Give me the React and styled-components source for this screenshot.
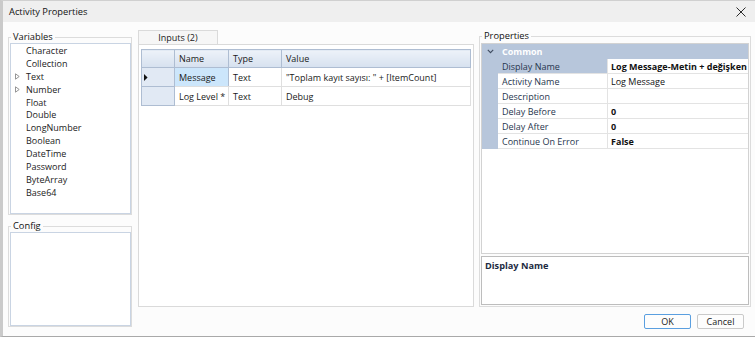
import React from "react";
import styled, { createGlobalStyle, css } from "styled-components";

const GlobalStyle = createGlobalStyle`
  html, body { margin: 0; padding: 0; background: #ffffff; }
  body { font-family: "Open Sans", "Noto Sans", sans-serif; color: #1a1a1a; }
  * { box-sizing: border-box; }
`;

const Window = styled.div`
  width: 755px;
  height: 337px;
  display: flex;
  flex-direction: column;
  border-left: 3px solid #cacaca;
  border-top: 1px solid #d0d0d0;
  border-bottom: 1px solid #a9a9a9;
  background: #fcfcfc;
`;

const TitleBar = styled.div`
  height: 21px;
  flex: none;
  display: flex;
  align-items: center;
  justify-content: space-between;
  padding: 0 9px 0 6px;
  background: #efefef;
  font-size: 9.3px;
  color: #111;
`;

const CloseButton = styled.button`
  all: unset;
  display: flex;
  width: 11px;
  height: 11px;
  align-items: center;
  justify-content: center;
`;

const Body = styled.div`
  flex: 1;
  display: flex;
  gap: 6px;
  padding: 0 4px 0 5px;
`;

const LeftColumn = styled.div`
  width: 124px;
  flex: none;
  display: flex;
  flex-direction: column;
  gap: 5px;
  padding-top: 9px;
`;

const Group = styled.fieldset`
  margin: 0;
  min-width: 0;
  padding: ${(p) => p.$pad || "0 0 0 1px"};
  border: 1px solid #dcdcdc;
`;

const Legend = styled.legend`
  margin-left: 1px;
  padding: 0 2px;
  font-size: 9.3px;
  line-height: 12px;
  color: #111;
`;

const ListBox = styled.div`
  height: ${(p) => p.$h}px;
  background: #ffffff;
  border: 1px solid #c9d4e3;
`;

const ListItem = styled.div`
  height: 12.9px;
  display: flex;
  align-items: center;
  padding-left: 4px;
  font-size: 9px;
  color: #222;
  white-space: nowrap;
`;

const Expander = styled.span`
  width: 11px;
  flex: none;
  display: flex;
  align-items: center;
`;

const Main = styled.div`
  flex: 1;
  display: flex;
  flex-direction: column;
  padding-top: 8px;
`;

const PanelsRow = styled.div`
  height: 277px;
  display: flex;
  gap: 5px;
`;

const TabPanel = styled.div`
  width: 336px;
  flex: none;
  display: flex;
  flex-direction: column;
`;

const Tab = styled.div`
  align-self: flex-start;
  width: 80px;
  height: 14px;
  border: 1px solid #dadada;
  border-bottom: none;
  background: #f6f6f6;
  font-size: 9px;
  line-height: 13px;
  text-align: center;
  color: #1a1a1a;
`;

const TabBody = styled.div`
  flex: 1;
  border: 1px solid #dadada;
  background: #ffffff;
  padding: 4px 2px 0 2px;
`;

const Table = styled.table`
  width: 330px;
  border-collapse: collapse;
  table-layout: fixed;
  border: 1px solid #aebdd2;
  font-size: 9px;
`;

const HeadCell = styled.th`
  height: 18px;
  padding: 0 4px;
  text-align: left;
  font-weight: normal;
  color: #1a1a1a;
  background: linear-gradient(#edf2f9, #d6e1ef);
  border: 1px solid #aebdd2;
  white-space: nowrap;
`;

const RowHead = styled.td`
  height: 19px;
  padding: 0 0 0 2px;
  background: #e1e9f4;
  border: 1px solid #aebdd2;
`;

const Cell = styled.td`
  height: 19px;
  padding: 0 4px;
  border: 1px solid #dfdfdf;
  color: #1a1a1a;
  white-space: nowrap;
  overflow: hidden;
  ${(p) =>
    p.$selected &&
    css`
      background: #cce6fb;
      border-right-color: #aebdd2;
    `}
`;

const PropsGroup = styled.fieldset`
  flex: 1;
  margin: 0;
  min-width: 0;
  padding: 1px;
  border: 1px solid #dcdcdc;
`;

const PropsInner = styled.div`
  height: 262px;
  display: flex;
  flex-direction: column;
  gap: 2px;
`;

const PropGrid = styled.div`
  flex: 1;
  border: 1px solid #d2d2d2;
  background: #ffffff;
  overflow: hidden;
`;

const PropRow = styled.div`
  height: 15px;
  display: grid;
  grid-template-columns: 16px 110px 1fr;
  font-size: 9px;
  ${(p) =>
    p.$category &&
    css`
      background: #b7c6db;
    `}
`;

const Margin = styled.div`
  background: #b7c6db;
  display: flex;
  align-items: center;
  justify-content: center;
`;

const CategoryLabel = styled.div`
  grid-column: 2 / 4;
  display: flex;
  align-items: center;
  padding-left: 4px;
  font-weight: 700;
  color: #ffffff;
`;

const PropName = styled.div`
  display: flex;
  align-items: center;
  padding-left: 4px;
  color: #27364e;
  border-right: 1px solid #e3e3e3;
  border-bottom: 1px solid #e3e3e3;
  background: ${(p) => (p.$selected ? "#b7c6db" : "#ffffff")};
  white-space: nowrap;
`;

const PropValue = styled.div`
  display: flex;
  align-items: center;
  padding-left: 3px;
  color: #121212;
  border-bottom: 1px solid #e3e3e3;
  font-weight: ${(p) => (p.$bold ? 700 : 400)};
  white-space: nowrap;
  overflow: hidden;
`;

const DescriptionBox = styled.div`
  height: 49px;
  flex: none;
  border: 1px solid #bdbdbd;
  background: #ffffff;
  padding: 3px 3px;
  font-size: 9.2px;
  line-height: 12px;
  font-weight: 700;
  color: #1d2b42;
`;

const Footer = styled.div`
  display: flex;
  justify-content: flex-end;
  gap: 6px;
  padding: 7px 7px 0 0;
`;

const Button = styled.button`
  width: 47px;
  height: 15px;
  padding: 0;
  font-family: "Open Sans", "Noto Sans", sans-serif;
  font-size: 9px;
  line-height: 13px;
  color: #1a1a1a;
  background: #fdfdfd;
  border: 1px solid ${(p) => (p.$primary ? "#5a9fe0" : "#cacaca")};
  border-radius: 2px;
`;

const variables = [
  { name: "Character" },
  { name: "Collection" },
  { name: "Text", expand: true },
  { name: "Number", expand: true },
  { name: "Float" },
  { name: "Double" },
  { name: "LongNumber" },
  { name: "Boolean" },
  { name: "DateTime" },
  { name: "Password" },
  { name: "ByteArray" },
  { name: "Base64" },
];

const inputs = [
  { name: "Message", type: "Text", value: "\"Toplam kayıt sayısı: \" + [ItemCount]", current: true },
  { name: "Log Level *", type: "Text", value: "Debug" },
];

const props = [
  { name: "Display Name", value: "Log Message-Metin + değişken", bold: true, selected: true },
  { name: "Activity Name", value: "Log Message" },
  { name: "Description", value: "" },
  { name: "Delay Before", value: "0", bold: true },
  { name: "Delay After", value: "0", bold: true },
  { name: "Continue On Error", value: "False", bold: true },
];

const TriangleOutline = () => (
  <svg width="5" height="7" viewBox="0 0 5 7">
    <path d="M0.5 0.8 L4.2 3.5 L0.5 6.2 Z" fill="none" stroke="#8a8a8a" strokeWidth="0.9" />
  </svg>
);

const RowPointer = () => (
  <svg width="4" height="7" viewBox="0 0 4 7">
    <path d="M0 0 L3.6 3.5 L0 7 Z" fill="#111" />
  </svg>
);

const Chevron = () => (
  <svg width="7" height="5" viewBox="0 0 7 5">
    <path d="M0.8 0.8 L3.5 3.6 L6.2 0.8" fill="none" stroke="#3f4c60" strokeWidth="1.1" />
  </svg>
);

const CloseIcon = () => (
  <svg width="10" height="10" viewBox="0 0 10 10">
    <path d="M0.5 0.5 L9.5 9.5 M9.5 0.5 L0.5 9.5" stroke="#2a2a2a" strokeWidth="1" />
  </svg>
);

export default function App() {
  return (
    <>
      <GlobalStyle />
      <Window>
        <TitleBar>
          <span>Activity Properties</span>
          <CloseButton aria-label="Close">
            <CloseIcon />
          </CloseButton>
        </TitleBar>
        <Body>
          <LeftColumn>
            <Group>
              <Legend>Variables</Legend>
              <ListBox $h={171}>
                {variables.map((v) => (
                  <ListItem key={v.name}>
                    <Expander>{v.expand && <TriangleOutline />}</Expander>
                    {v.name}
                  </ListItem>
                ))}
              </ListBox>
            </Group>
            <Group>
              <Legend>Config</Legend>
              <ListBox $h={94} />
            </Group>
          </LeftColumn>
          <Main>
            <PanelsRow>
              <TabPanel>
                <Tab>Inputs (2)</Tab>
                <TabBody>
                  <Table>
                    <colgroup>
                      <col style={{ width: 33 }} />
                      <col style={{ width: 54 }} />
                      <col style={{ width: 53 }} />
                      <col />
                    </colgroup>
                    <thead>
                      <tr>
                        <HeadCell />
                        <HeadCell>Name</HeadCell>
                        <HeadCell>Type</HeadCell>
                        <HeadCell>Value</HeadCell>
                      </tr>
                    </thead>
                    <tbody>
                      {inputs.map((r) => (
                        <tr key={r.name}>
                          <RowHead>{r.current && <RowPointer />}</RowHead>
                          <Cell $selected={r.current}>{r.name}</Cell>
                          <Cell>{r.type}</Cell>
                          <Cell>{r.value}</Cell>
                        </tr>
                      ))}
                    </tbody>
                  </Table>
                </TabBody>
              </TabPanel>
              <PropsGroup>
                <Legend>Properties</Legend>
                <PropsInner>
                  <PropGrid>
                    <PropRow $category>
                      <Margin>
                        <Chevron />
                      </Margin>
                      <CategoryLabel>Common</CategoryLabel>
                    </PropRow>
                    {props.map((p) => (
                      <PropRow key={p.name}>
                        <Margin />
                        <PropName $selected={p.selected}>{p.name}</PropName>
                        <PropValue $bold={p.bold}>{p.value}</PropValue>
                      </PropRow>
                    ))}
                  </PropGrid>
                  <DescriptionBox>Display Name</DescriptionBox>
                </PropsInner>
              </PropsGroup>
            </PanelsRow>
            <Footer>
              <Button $primary>OK</Button>
              <Button>Cancel</Button>
            </Footer>
          </Main>
        </Body>
      </Window>
    </>
  );
}
